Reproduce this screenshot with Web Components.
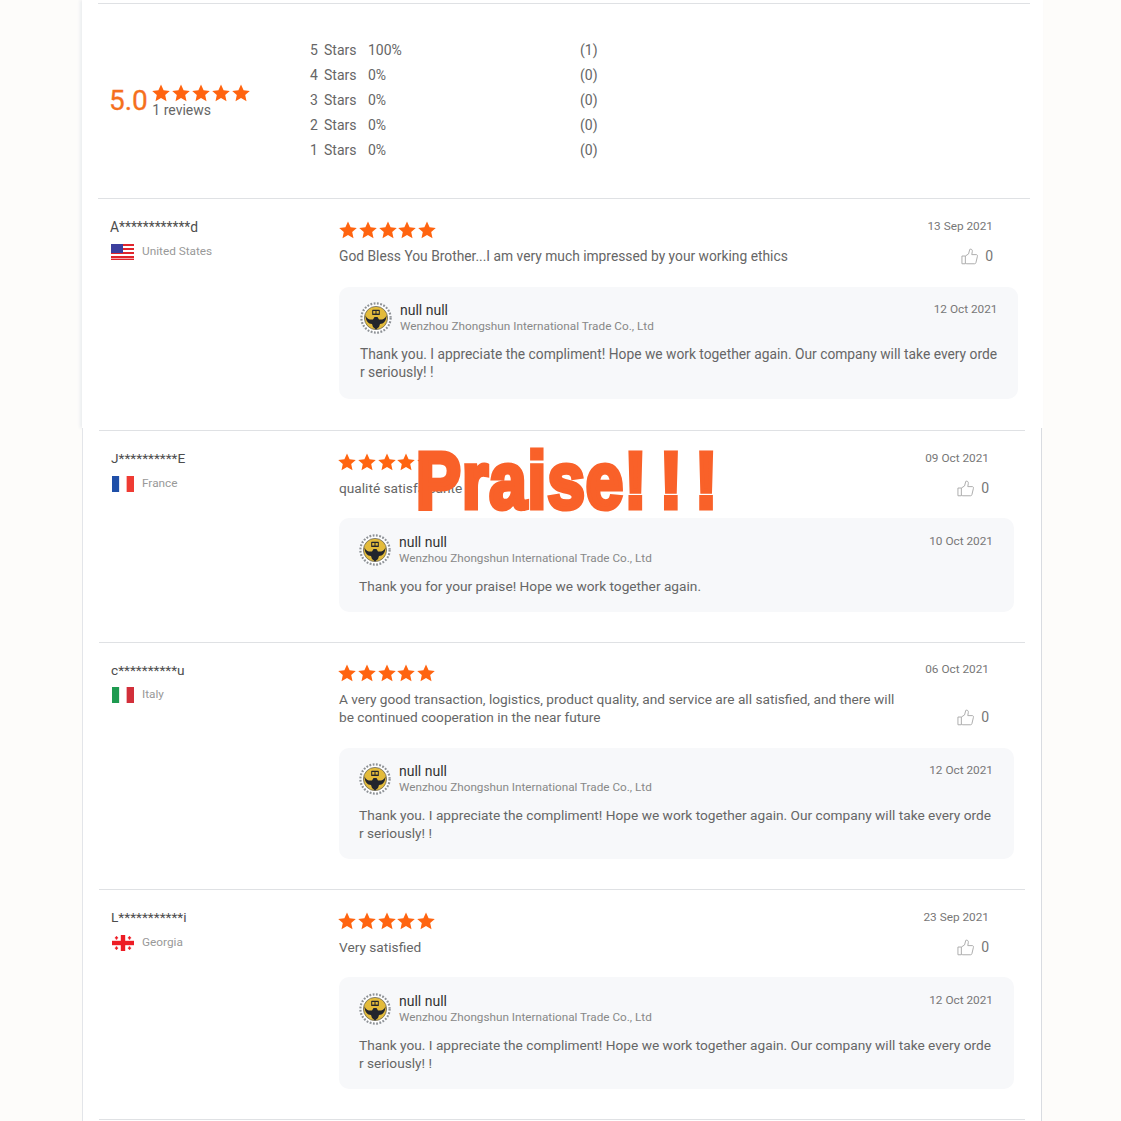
<!DOCTYPE html>
<html lang="en"><head><meta charset="utf-8"><title>Reviews</title>
<style>
html,body{margin:0;padding:0;background:#fdfcfa}
body{height:1121px;overflow:hidden;font-family:Roboto,"Liberation Sans",sans-serif;color:#666}
</style></head><body>
<rv-panel kind="first">
  <rv-summary></rv-summary>
  <rv-item name="A************d" country="United States" flag="us" date="13 Sep 2021" reply-date="12 Oct 2021" reply="long">God Bless You Brother...I am very much impressed by your working ethics</rv-item>
</rv-panel>
<rv-panel kind="second">
  <rv-item name="J**********E" country="France" flag="fr" date="09 Oct 2021" reply-date="10 Oct 2021" reply="short">qualité satisfaisante</rv-item>
  <rv-item tight name="c**********u" country="Italy" flag="it" date="06 Oct 2021" reply-date="12 Oct 2021" reply="long">A very good transaction, logistics, product quality, and service are all satisfied, and there will be continued cooperation in the near future</rv-item>
  <rv-item last name="L***********i" country="Georgia" flag="ge" date="23 Sep 2021" reply-date="12 Oct 2021" reply="long">Very satisfied</rv-item>
  <rv-banner>Praise! ! !</rv-banner>
</rv-panel>
<script>
const STAR='M9 .4l2.6 5.8 6.2.7-4.6 4.2 1.3 6.2L9 14.1l-5.5 3.2 1.3-6.2L.2 6.9l6.2-.7z';
function shadow(el,html){el.attachShadow({mode:'open'}).innerHTML=html;}

class RvStars extends HTMLElement{connectedCallback(){
  const s=`<svg viewBox="0 0 18 18" width="18" height="18"><path d="${STAR}" fill="#ff6410"/></svg>`;
  shadow(this,`<style>:host{display:flex;gap:1.8px;height:18px;margin-left:var(--star-left,0)}svg{display:block;flex:none}</style>${s.repeat(5)}`);
}}
customElements.define('rv-stars',RvStars);

const FLAGS={
 us:`<rect width="23" height="16" fill="#fff"/><g fill="#e0252c"><rect width="23" height="2"/><rect y="4" width="23" height="2"/><rect y="8" width="23" height="2"/><rect y="12" width="23" height="2"/><rect y="14.6" width="23" height="1.4"/></g><rect width="12" height="9" fill="#3c3f9e"/>`,
 fr:`<rect width="7.7" height="16" fill="#1f4fa8"/><rect x="7.7" width="7.6" height="16" fill="#fff"/><rect x="15.3" width="7.7" height="16" fill="#ef3b33"/>`,
 it:`<rect width="7.7" height="16" fill="#1e9a50"/><rect x="7.7" width="7.6" height="16" fill="#fff"/><rect x="15.3" width="7.7" height="16" fill="#d22f3a"/>`,
 ge:`<rect width="23" height="16" fill="#fff"/><rect x="9.2" width="4.6" height="16" fill="#ed1c24"/><rect y="5.8" width="23" height="4.4" fill="#ed1c24"/><g fill="#ed1c24"><rect x="4" y="1.2" width="1.4" height="3.4"/><rect x="3" y="2.2" width="3.4" height="1.3"/><rect x="17.6" y="1.2" width="1.4" height="3.4"/><rect x="16.6" y="2.2" width="3.4" height="1.3"/><rect x="4" y="11.4" width="1.4" height="3.4"/><rect x="3" y="12.5" width="3.4" height="1.3"/><rect x="17.6" y="11.4" width="1.4" height="3.4"/><rect x="16.6" y="12.5" width="3.4" height="1.3"/></g>`
};
class RvFlag extends HTMLElement{connectedCallback(){
  shadow(this,`<style>:host{display:block;width:var(--flag-w,23px);height:16px;flex:none;margin-left:1px}svg{display:block;width:100%;height:100%}</style><svg viewBox="0 0 23 16" preserveAspectRatio="none">${FLAGS[this.getAttribute('code')]}</svg>`);
}}
customElements.define('rv-flag',RvFlag);

class RvLike extends HTMLElement{connectedCallback(){
  shadow(this,`<style>:host{display:flex;align-items:center;gap:7px;font-size:14px;color:#777;line-height:18px}svg{display:block}</style>
  <svg viewBox="0 0 18 18" width="17" height="17" fill="none" stroke="#a9a9a9" stroke-width="1"><path d="M1 8.5h3.6v8.2H1z"/><path d="M4.6 8.5L8 6.3 9.3 1.4c1.6-.6 2.9.4 2.7 2.1L11.4 7h4.7c1 0 1.6.8 1.3 1.8l-1.6 6.7c-.2.8-.7 1.2-1.5 1.2H6.2c-.7 0-1.2-.3-1.6-.8"/></svg><span>0</span>`);
}}
customElements.define('rv-like',RvLike);

class RvLogo extends HTMLElement{connectedCallback(){
  shadow(this,`<style>:host{display:block;width:32px;height:32px;flex:none}svg{display:block}</style>
  <svg viewBox="0 0 32 32" width="32" height="32"><circle cx="16" cy="16" r="14.6" fill="#fff" stroke="#8d9196" stroke-width="2.2" stroke-dasharray="1.8 1.5"/><circle cx="16" cy="16" r="11.6" fill="#e3bb3b" stroke="#55585c" stroke-width=".7"/>
  <path d="M5.5 13.5C7 17 10 18 13 17.5l1.5-2.5h3l1.500 2.500c3 .5 6-.5 7.500-4 0 5-3 8.500-6.500 8.500l-1 3-3 2.500-3-2.500-1-3c-3.500 0-6.500-3.500-6.500-8.500z" fill="#23252c"/>
  <rect x="12.2" y="7.8" width="7.6" height="5.2" rx=".6" fill="#23252c"/><rect x="13.2" y="9" width="2.3" height="2.6" fill="#e3bb3b"/><rect x="16.5" y="9" width="2.3" height="2.6" fill="#e3bb3b"/></svg>`);
}}
customElements.define('rv-logo',RvLogo);

class RvPanel extends HTMLElement{connectedCallback(){
  shadow(this,`<style>
  :host{display:block;position:relative;box-sizing:border-box;background:#fff}
  :host([kind=first]){height:428px;width:961px;margin-left:82px;padding:3px 13px 0 16px;box-shadow:-2px 0 3px #ebedf0;
    font-size:13.8px;--co:11.77px;--left:229px;--pr:12px;--top-pr:25px;--rl:21px;--rr:19px;--rd:1.5px;--rt:15px;--rb:18px;--item-gap:22px;--flag-w:23px;--star-left:0px;--name-mt:-3px;--name-gap:8px}
  :host([kind=second]){height:693px;width:960px;margin-left:82px;padding:2px 16px 0 16px;border-left:1px solid #e3e5e9;border-right:1px solid #d9dce1;
    font-size:13.7px;--co:11.72px;--left:228px;--pr:11px;--top-pr:25px;--rl:20px;--rr:21px;--rd:0px;--rt:16px;--rb:17px;--item-gap:21px;--flag-w:22px;--star-left:-1px;--name-mt:-4px;--name-gap:9px}
  </style><slot></slot>`);
}}
customElements.define('rv-panel',RvPanel);

class RvSummary extends HTMLElement{connectedCallback(){
  const rows=[['5','100%','(1)'],['4','0%','(0)'],['3','0%','(0)'],['2','0%','(0)'],['1','0%','(0)']];
  shadow(this,`<style>
  :host{display:flex;align-items:center;box-sizing:border-box;height:195px;border-top:1px solid #dfe1e4;padding-left:12px;font-size:14px;color:#666}
  .score{display:flex;align-items:center;gap:4.5px;width:200px;flex:none;margin-top:-1px}
  .num{font-size:28px;line-height:32px;color:#f5701d;margin-left:-1px;-webkit-text-stroke:.3px #f5701d}
  .side{display:flex;flex-direction:column}
  .rev{line-height:16px;color:#666}
  .rows{display:grid;grid-template-columns:14px 44px 212px auto;grid-auto-rows:25px;align-items:center;line-height:25px;margin-bottom:1px}
  </style>
  <div class="score"><span class="num">5.0</span><div class="side"><rv-stars></rv-stars><span class="rev">1 reviews</span></div></div>
  <div class="rows">${rows.map(r=>`<span>${r[0]}</span><span>Stars</span><span>${r[1]}</span><span>${r[2]}</span>`).join('')}</div>`);
}}
customElements.define('rv-summary',RvSummary);

class RvReply extends HTMLElement{connectedCallback(){
  const LONG='Thank you. I appreciate the compliment! Hope we work together again. Our company will take every order seriously! !';
  const SHORT='Thank you for your praise! Hope we work together again.';
  const msg=this.getAttribute('kind')==='short'?SHORT:LONG;
  shadow(this,`<style>
  :host{display:block;box-sizing:border-box;background:#f7f8fa;border-radius:10px;padding:var(--rt,15px) var(--rr,21px) var(--rb,18px) var(--rl,20px);margin-top:var(--item-gap,21px)}
  .head{display:flex;align-items:center;gap:8px;height:32px}
  .who{flex:1;min-width:0}
  .name{font-size:14px;line-height:16px;color:#333}
  .co{font-size:var(--co,11.72px);line-height:16px;color:#888}
  .date{font-size:11.8px;line-height:16px;color:#777;align-self:flex-start;margin-top:-1px;margin-right:var(--rd,0)}
  .msg{margin-top:11px;line-height:18px;color:#666;word-break:break-all}
  </style>
  <div class="head"><rv-logo></rv-logo><div class="who"><div class="name">null null</div><div class="co">Wenzhou Zhongshun International Trade Co., Ltd</div></div><div class="date">${this.getAttribute('date')}</div></div>
  <div class="msg">${msg}</div>`);
}}
customElements.define('rv-reply',RvReply);

class RvItem extends HTMLElement{connectedCallback(){
  const a=n=>this.getAttribute(n);
  shadow(this,`<style>
  :host{display:grid;grid-template-columns:var(--left,228px) 1fr;box-sizing:border-box;border-top:1px solid #dfe1e4;padding:22px var(--pr,11px) 30px 12px}
  :host([tight]){padding-top:21px;--item-gap:22px;--rt:15px;--name-mt:-3px;--name-gap:8px}
  :host([last]){border-bottom:1px solid #dfe1e4}
  .who{display:flex;flex-direction:column;gap:var(--name-gap,8px)}
  .name{line-height:18px;color:#4d4d4d;margin-top:var(--name-mt,-3px)}
  .loc{display:flex;align-items:center;gap:8px;height:16px;font-size:11.8px;color:#999;line-height:16px}
  .loc span{margin-bottom:2px}
  .top{display:grid;grid-template-columns:1fr auto;column-gap:20px;padding-right:var(--top-pr,26px)}
  .c{min-width:0}
  .txt{margin-top:8px;line-height:18px;color:#666}
  .side{display:flex;flex-direction:column;justify-content:space-between;align-items:flex-end}
  .date{font-size:11.8px;line-height:16px;color:#777;margin-top:-3px}
  </style>
  <div class="who"><div class="name">${a('name')}</div><div class="loc"><rv-flag code="${a('flag')}"></rv-flag><span>${a('country')}</span></div></div>
  <div><div class="top"><div class="c"><rv-stars></rv-stars><div class="txt"><slot></slot></div></div>
  <div class="side"><div class="date">${a('date')}</div><rv-like></rv-like></div></div>
  <rv-reply kind="${a('reply')}" date="${a('reply-date')}"></rv-reply></div>`);
}}
customElements.define('rv-item',RvItem);

class RvBanner extends HTMLElement{connectedCallback(){
  shadow(this,`<style>
  :host{position:absolute;left:333px;top:9px;display:block;white-space:nowrap;color:#f96129;font:700 80px/88px "Liberation Sans",sans-serif;letter-spacing:1.3px;word-spacing:-9.4px;-webkit-text-stroke:5px #f96129;transform:scaleX(.84);transform-origin:0 0;pointer-events:none}
  </style><slot></slot>`);
}}
customElements.define('rv-banner',RvBanner);
</script>
</body></html>
